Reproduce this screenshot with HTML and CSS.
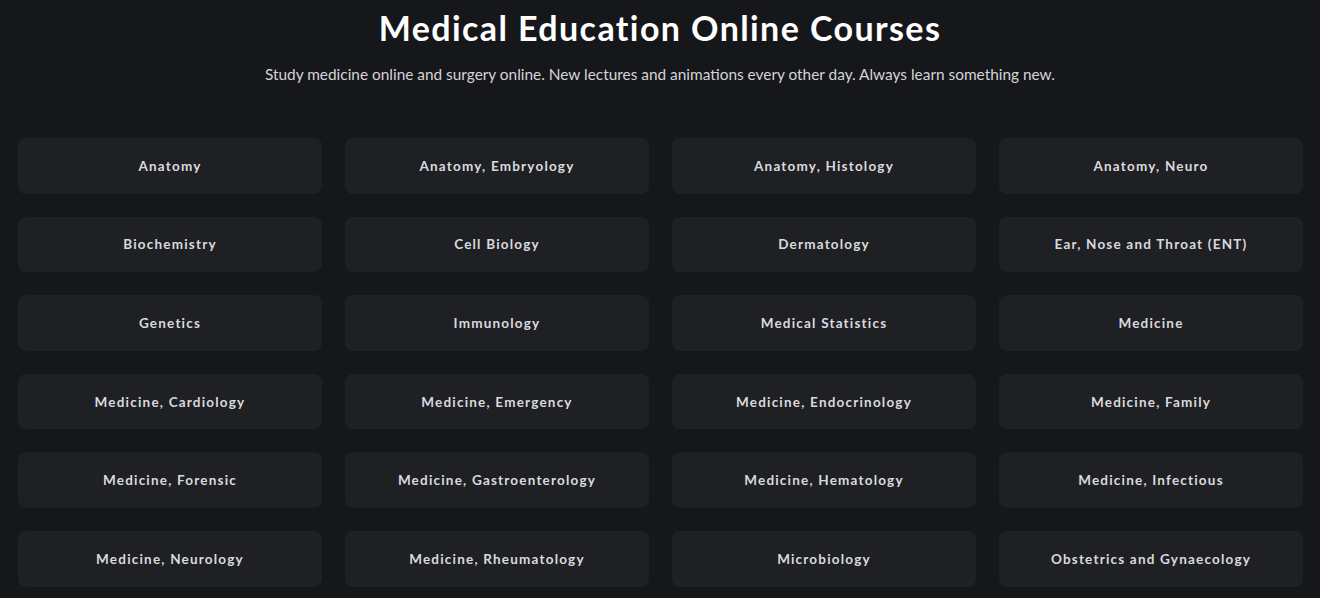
FILE: index.html
```html
<!DOCTYPE html>
<html>
<head>
<meta charset="utf-8">
<link rel="stylesheet" href="styles.css">
</head>
<body>
<header class="hero">
  <h1 class="title">Medical Education Online Courses</h1>
  <p class="subtitle">Study medicine online and surgery online. New lectures and animations every other day. Always learn something new.</p>
</header>
<main class="grid">
  <a class="card">Anatomy</a>
  <a class="card">Anatomy, Embryology</a>
  <a class="card">Anatomy, Histology</a>
  <a class="card">Anatomy, Neuro</a>
  <a class="card">Biochemistry</a>
  <a class="card">Cell Biology</a>
  <a class="card">Dermatology</a>
  <a class="card">Ear, Nose and Throat (ENT)</a>
  <a class="card">Genetics</a>
  <a class="card">Immunology</a>
  <a class="card">Medical Statistics</a>
  <a class="card">Medicine</a>
  <a class="card">Medicine, Cardiology</a>
  <a class="card">Medicine, Emergency</a>
  <a class="card">Medicine, Endocrinology</a>
  <a class="card">Medicine, Family</a>
  <a class="card">Medicine, Forensic</a>
  <a class="card">Medicine, Gastroenterology</a>
  <a class="card">Medicine, Hematology</a>
  <a class="card">Medicine, Infectious</a>
  <a class="card">Medicine, Neurology</a>
  <a class="card">Medicine, Rheumatology</a>
  <a class="card">Microbiology</a>
  <a class="card">Obstetrics and Gynaecology</a>
</main>
</body>
</html>
```
FILE: styles.css
```css
html, body {
  margin: 0;
  padding: 0;
  background: #16171b;
  overflow: hidden;
}
body {
  font-family: "Lato", "Noto Sans", sans-serif;
  color: #e6e6ea;
}
.hero {
  text-align: center;
  padding-top: 7px;
}
.title {
  margin: 0;
  font-size: 34px;
  line-height: 42px;
  font-weight: 700;
  color: #ffffff;
  letter-spacing: 1.4px;
}
.subtitle {
  margin: 14px 0 0;
  font-size: 15.4px;
  line-height: 22px;
  color: #d4d4d8;
}
.grid {
  display: grid;
  grid-template-columns: repeat(4, 1fr);
  column-gap: 23px;
  row-gap: 23px;
  padding: 53px 17px 0 18px;
}
.card {
  display: flex;
  align-items: center;
  justify-content: center;
  height: 55.6px;
  background: #1f2024;
  border-radius: 8px;
  font-size: 13.5px;
  font-weight: 700;
  letter-spacing: 1.2px;
  color: #dadade;
}
```
